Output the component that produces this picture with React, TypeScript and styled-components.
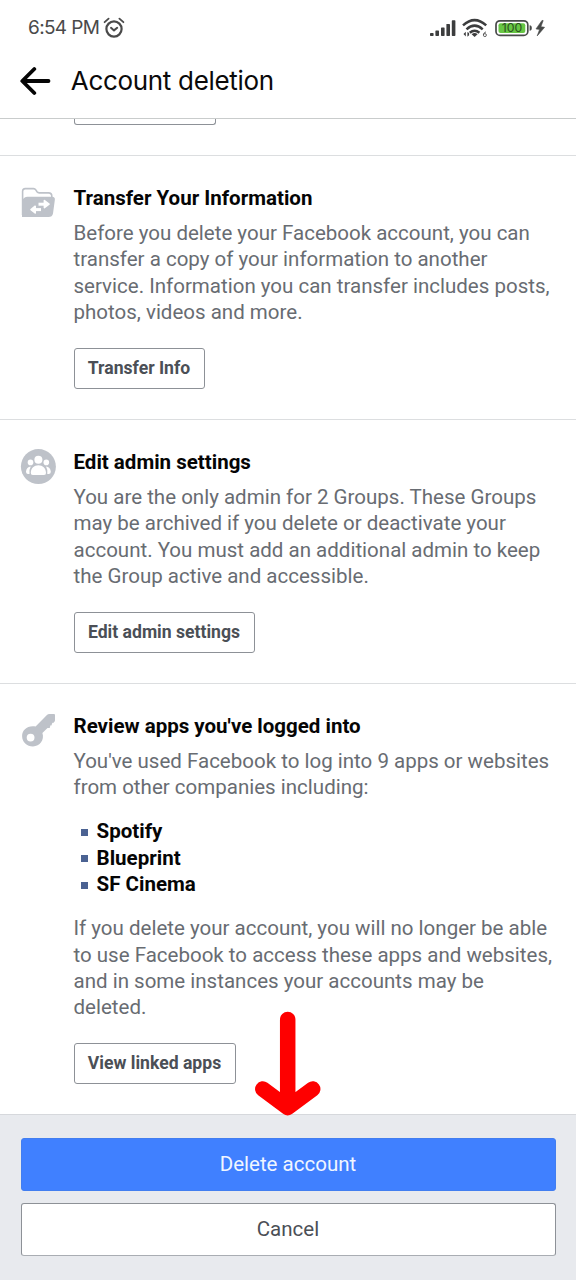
import React from 'react';
import styled, { createGlobalStyle } from 'styled-components';

const GlobalStyle = createGlobalStyle`
  *, *::before, *::after { box-sizing: border-box; }
  body {
    margin: 0;
    background: #fff;
    font-family: Roboto, 'Liberation Sans', sans-serif;
  }
`;

const Screen = styled.div`
  display: flex;
  flex-direction: column;
  width: 576px;
  height: 1280px;
  overflow: hidden;
  background: #fff;
`;

const StatusBar = styled.div`
  display: flex;
  flex: none;
  align-items: center;
  justify-content: space-between;
  height: 56px;
  padding: 0 29px 0 28px;
`;

const Clock = styled.div`
  display: flex;
  align-items: center;
  gap: 4px;
  color: #4a4a4a;
  font: 400 19px/24px Inter, sans-serif;
  letter-spacing: -0.65px;
`;

const StatusIcons = styled.div`
  display: flex;
  align-items: center;
`;

const Header = styled.header`
  display: flex;
  flex: none;
  align-items: center;
  gap: 19.8px;
  height: 63px;
  padding: 0 20px 12px;
  border-bottom: 1px solid #c9cccc;
`;

const PageTitle = styled.h1`
  margin: 0;
  color: #0a0a0a;
  font: 400 26px/32px Inter, sans-serif;
  letter-spacing: -0.32px;
  white-space: nowrap;
`;

const Content = styled.main`
  display: flex;
  flex: none;
  flex-direction: column;
  height: 995px;
  overflow: hidden;
`;

const PreviousSection = styled.section`
  display: flex;
  flex: none;
  align-items: flex-end;
  height: 36px;
  padding: 0 0 30px 74px;
`;

const ClippedButton = styled.div`
  width: 142px;
  height: 6px;
  border: 1px solid #8d9197;
  border-top: 0;
  border-radius: 0 0 3px 3px;
`;

const Section = styled.section<{ $height: number }>`
  display: grid;
  flex: none;
  grid-template-columns: 36px 1fr;
  column-gap: 17.5px;
  align-content: start;
  height: ${(p) => p.$height}px;
  padding: 28.8px 0 0 20px;
  border-top: 1px solid #dcdee0;
`;

const IconSlot = styled.div`
  padding-top: 0.2px;
  svg { display: block; }
`;

const SectionTitle = styled.h2`
  margin: 0 0 8.8px;
  color: #050505;
  font-size: 20.53px;
  font-weight: 700;
  line-height: 26.4px;
  white-space: nowrap;
`;

const Line = styled.span`
  display: block;
  white-space: nowrap;
`;

const Paragraph = styled.p`
  margin: 0;
  color: #686c72;
  font-size: 20.53px;
  line-height: 26.4px;
`;

const AppList = styled.ul`
  margin: 17.6px 0;
  padding: 0 0 0 7.5px;
  list-style: none;
`;

const AppItem = styled.li`
  display: flex;
  align-items: center;
  gap: 8.6px;
  color: #050505;
  font-size: 20.53px;
  font-weight: 700;
  line-height: 26.4px;

  &::before {
    width: 7px;
    height: 7px;
    margin-top: 1.6px;
    background: #4b6292;
    content: '';
  }
`;

const OutlineButton = styled.button<{ $width: number }>`
  display: block;
  width: ${(p) => p.$width}px;
  height: 41px;
  margin: 22.4px 0 0 0.5px;
  padding: 0 1px 1px 0;
  border: 1px solid #8d9197;
  border-radius: 3px;
  background: #fff;
  color: #4b4f56;
  font: 700 17.6px/38px Roboto, sans-serif;
  text-align: center;
  white-space: nowrap;
`;

const Footer = styled.footer`
  position: relative;
  display: flex;
  flex: 1;
  flex-direction: column;
  gap: 12px;
  padding: 23px 20px 0 21px;
  border-top: 1px solid #d6d8dc;
  background: #e8eaee;
`;

const WideButton = styled.button<{ $primary?: boolean }>`
  flex: none;
  width: 100%;
  height: 53px;
  padding: 0 1px 1px 0;
  border: 1px solid ${(p) => (p.$primary ? '#427ef0' : '#8d9197')};
  border-bottom-color: ${(p) => (p.$primary ? '#427ef0' : '#a9adb3')};
  border-radius: 3px;
  background: ${(p) => (p.$primary ? '#4080ff' : '#fff')};
  color: ${(p) => (p.$primary ? '#f0f6ff' : '#4b4f56')};
  font: 400 20.53px/50px Roboto, sans-serif;
`;

const Pointer = styled.svg`
  position: absolute;
  top: -105px;
  left: 253px;
`;

const AlarmIcon = () => (
  <svg width="22" height="22" viewBox="0 0 22 22" fill="none" stroke="#4a4a4a" strokeLinecap="round" strokeLinejoin="round">
    <circle cx="11" cy="12" r="7.6" strokeWidth="2.2" />
    <path d="M1.6 5.2 5.6 1.6M20.4 5.2 16.4 1.6" strokeWidth="1.8" />
    <path d="M8 10.8 11 13.4 14.2 10.8" strokeWidth="2" />
  </svg>
);

const StatusGlyphs = () => (
  <svg width="118" height="20" viewBox="429 18 118 20">
    <g fill="#3c3d3e">
      <rect x="430" y="33" width="3.6" height="3" rx="0.7" />
      <rect x="435.4" y="30.4" width="3.6" height="5.6" rx="0.7" />
      <rect x="441" y="27.4" width="3.6" height="8.6" rx="0.7" />
      <rect x="446.4" y="23.9" width="3.6" height="12.1" rx="0.7" />
      <rect x="451.8" y="20.3" width="3.6" height="15.7" rx="0.7" />
      <path d="M474.6 37 471.6 34.2Q474.6 31.7 477.6 34.2Z" />
      <path d="M465.8 31.8v4.6l-2.3-2.5zM467.4 32v4.8l1.7-1.6v-2.2z" />
    </g>
    <g fill="none" stroke="#3c3d3e" strokeWidth="2.5">
      <path d="M463 25.4Q474.6 14.8 486.2 25.4" />
      <path d="M466.5 29.3Q474.6 21.9 482.7 29.3" />
      <path d="M469.8 32.8Q474.6 28.6 479.4 32.8" />
    </g>
    <path d="M486 31.8Q483.2 33 483.3 35" fill="none" stroke="#555" strokeWidth="0.9" />
    <circle cx="484.9" cy="35.1" r="1.5" fill="none" stroke="#555" strokeWidth="0.9" />
    <rect x="496" y="20.8" width="31.8" height="14.6" rx="4" fill="#fff" stroke="#484a49" strokeWidth="1.7" />
    <rect x="498.5" y="23.2" width="26.8" height="9.8" rx="2" fill="#67c644" />
    <path d="M529.6 25.2q2.2 0 2.2 2.8t-2.2 2.8z" fill="#484a49" />
    <text x="512" y="32.2" textAnchor="middle" fontFamily="Inter, sans-serif" fontSize="11.5" textLength="20.5" lengthAdjust="spacingAndGlyphs" fill="#2b5120">100</text>
    <path d="M542 20.4 536 28.9 539.6 29.4 537.2 35.9 544.6 27.3 540.9 26.7 543.2 20.6Z" fill="#484a49" stroke="#484a49" strokeWidth="0.6" />
  </svg>
);

const BackIcon = () => (
  <svg width="31" height="30" viewBox="0 0 31 30" fill="none" stroke="#050505" strokeWidth="3.8" strokeLinecap="round" strokeLinejoin="round">
    <path d="M28.5 15H3M14.3 3 2.3 15 14.3 27" />
  </svg>
);

const FolderIcon = () => (
  <svg width="36" height="36" viewBox="0 0 36 36">
    <path d="M2.6 30V6.3Q2.6 3.6 5.3 3.6H13.5Q15 3.6 15.8 4.9L17 6.8Q17.8 7.9 19.2 7.9H28.5Q31.8 7.9 31.8 11.3V13" fill="none" stroke="#bec2c9" strokeWidth="1.6" />
    <path d="M2 32V16Q4 11.8 7.5 11.8H32Q35.5 11.8 34.8 15.3L33 28.5Q32.3 32 28.5 32Z" fill="#bec2c9" />
    <g stroke="#fff" strokeWidth="3" fill="#fff" strokeLinejoin="round">
      <path d="M18.5 19.2H25" />
      <path d="M24.4 15.6 29 19.2 24.4 22.6Z" strokeWidth="1.6" />
      <path d="M14 24.6H21" />
      <path d="M15.2 21.2 11 24.6 15.2 28Z" strokeWidth="1.6" />
    </g>
  </svg>
);

const GroupIcon = () => (
  <svg width="36" height="36" viewBox="0 0 36 36">
    <circle cx="18.4" cy="17.6" r="17.5" fill="#bec2c9" />
    <g fill="#fff">
      <circle cx="18.4" cy="10.8" r="4" />
      <circle cx="10.5" cy="13.4" r="2.8" />
      <circle cx="26.3" cy="13.4" r="2.8" />
      <path d="M12.8 26Q10.6 26 10.8 23.7C11.1 19 14 16.2 18.4 16.2S25.7 19 26 23.7Q26.2 26 24 26Z" />
      <path d="M9.5 25H7.8Q5.8 25 6 22.6Q6.5 18.1 10.8 17.6Q9 20.5 9.5 25ZM27.3 25H29Q31 25 30.8 22.6Q30.3 18.1 26 17.6Q27.8 20.5 27.3 25Z" />
    </g>
  </svg>
);

const KeyIcon = () => (
  <svg width="36" height="36" viewBox="0 0 36 36">
    <path
      fillRule="evenodd"
      fill="#bec2c9"
      d="M15.6 13.4 27.2 1.7Q28 .9 29.2 .9H34Q35 .9 35 1.9V7.2Q35 8.4 34 9.2L32.8 10.2 32.3 9.6 31.5 12.4 30.5 12.3 29.7 15 27.5 15 22.4 20C24.7 26.6 19.8 33.4 13 33.4C6.9 33.4 2.1 28.9 2.1 22.9C2.1 16.9 7.5 11.9 15.6 13.4ZM10.6 20.7A3.9 3.9 0 1 0 10.61 28.5A3.9 3.9 0 1 0 10.6 20.7Z"
    />
  </svg>
);

export default function App() {
  return (
    <>
      <GlobalStyle />
      <Screen>
        <StatusBar>
          <Clock>
            6:54 PM
            <AlarmIcon />
          </Clock>
          <StatusIcons>
            <StatusGlyphs />
          </StatusIcons>
        </StatusBar>
        <Header>
          <BackIcon />
          <PageTitle>Account deletion</PageTitle>
        </Header>
        <Content>
          <PreviousSection>
            <ClippedButton />
          </PreviousSection>
          <Section $height={264}>
            <IconSlot><FolderIcon /></IconSlot>
            <div>
              <SectionTitle>Transfer Your Information</SectionTitle>
              <Paragraph>
                <Line>Before you delete your Facebook account, you can</Line>
                <Line>transfer a copy of your information to another</Line>
                <Line>service. Information you can transfer includes posts,</Line>
                <Line>photos, videos and more.</Line>
              </Paragraph>
              <OutlineButton $width={131}>Transfer Info</OutlineButton>
            </div>
          </Section>
          <Section $height={264}>
            <IconSlot><GroupIcon /></IconSlot>
            <div>
              <SectionTitle>Edit admin settings</SectionTitle>
              <Paragraph>
                <Line>You are the only admin for 2 Groups. These Groups</Line>
                <Line>may be archived if you delete or deactivate your</Line>
                <Line>account. You must add an additional admin to keep</Line>
                <Line>the Group active and accessible.</Line>
              </Paragraph>
              <OutlineButton $width={181}>Edit admin settings</OutlineButton>
            </div>
          </Section>
          <Section $height={431}>
            <IconSlot><KeyIcon /></IconSlot>
            <div>
              <SectionTitle>Review apps you've logged into</SectionTitle>
              <Paragraph>
                <Line>You've used Facebook to log into 9 apps or websites</Line>
                <Line>from other companies including:</Line>
              </Paragraph>
              <AppList>
                <AppItem>Spotify</AppItem>
                <AppItem>Blueprint</AppItem>
                <AppItem>SF Cinema</AppItem>
              </AppList>
              <Paragraph>
                <Line>If you delete your account, you will no longer be able</Line>
                <Line>to use Facebook to access these apps and websites,</Line>
                <Line>and in some instances your accounts may be</Line>
                <Line>deleted.</Line>
              </Paragraph>
              <OutlineButton $width={162}>View linked apps</OutlineButton>
            </div>
          </Section>
        </Content>
        <Footer>
          <WideButton $primary>Delete account</WideButton>
          <WideButton>Cancel</WideButton>
          <Pointer width="70" height="108" viewBox="253 1010 70 108" fill="none" stroke="#fe0000" strokeWidth="15.5" strokeLinecap="round" strokeLinejoin="round">
            <path d="M287.7 1019.5V1104M262.8 1089 287.7 1107.5 312.7 1089" />
          </Pointer>
        </Footer>
      </Screen>
    </>
  );
}
